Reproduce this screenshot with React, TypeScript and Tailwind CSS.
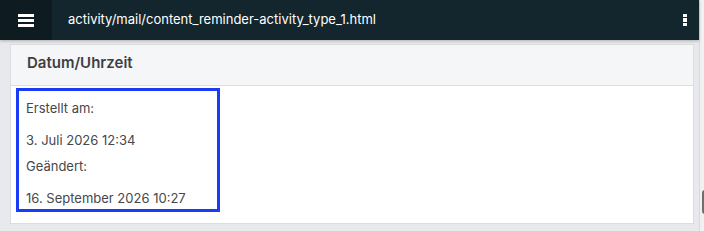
import React from "react";

export default function App() {
  return (
    <div className="w-[704px] h-[231px] overflow-hidden bg-[#e8e9ec] flex" style={{ fontFamily: "Inter, 'Liberation Sans', sans-serif" }}>
      <div className="flex-1 flex flex-col">
        <div className="h-[40px] bg-[#13262e] flex items-center shadow-[0_1px_3px_rgba(0,0,0,0.25)] relative z-10">
          <div className="w-[52px] h-full bg-[#0e1c22] flex items-center justify-center">
            <div className="flex flex-col gap-[2px]">
              <div className="w-[16px] h-[3px] bg-white" />
              <div className="w-[16px] h-[3px] bg-white" />
              <div className="w-[16px] h-[3px] bg-white" />
            </div>
          </div>
          <div className="ml-[16px] text-white text-[13px] flex-1">activity/mail/content_reminder-activity_type_1.html</div>
          <div className="mr-[12px] flex flex-col gap-[1px]">
            <div className="w-[4px] h-[3.5px] bg-white" />
            <div className="w-[4px] h-[3.5px] bg-white" />
            <div className="w-[4px] h-[3.5px] bg-white" />
          </div>
        </div>
        <div className="flex-1 pl-[10px] pr-[5px] pt-[4px]">
          <div className="bg-white border border-[#dcdde0] h-[180px]">
            <div className="h-[41px] bg-[#f5f6f7] border-b border-[#dcdde0] flex items-center pb-[3px] pl-[16px] text-[15px] font-semibold text-[#3d3f44]">Datum/Uhrzeit</div>
            <div className="pl-[5px] pt-[2px]">
              <div className="w-[204px] h-[124px] border-[3px] border-[#1a3cf5] pl-[7px] text-[13px] text-[#45474c]">
                <div className="pt-[9px] leading-[16px]">Erstellt am:</div>
                <div className="mt-[16px] leading-[16px]">3. Juli 2026 12:34</div>
                <div className="mt-[10px] leading-[16px]">Geändert:</div>
                <div className="mt-[16px] leading-[16px]">16. September 2026 10:27</div>
              </div>
            </div>
          </div>
        </div>
      </div>
      <div className="w-[5px] bg-[#f1f1f1] border-l border-[#d9d9d9] relative">
        <div className="absolute left-[2px] top-[190px] w-[4px] h-[24px] rounded-l-[3px] bg-[#6e6e6e]" />
      </div>
    </div>
  );
}
